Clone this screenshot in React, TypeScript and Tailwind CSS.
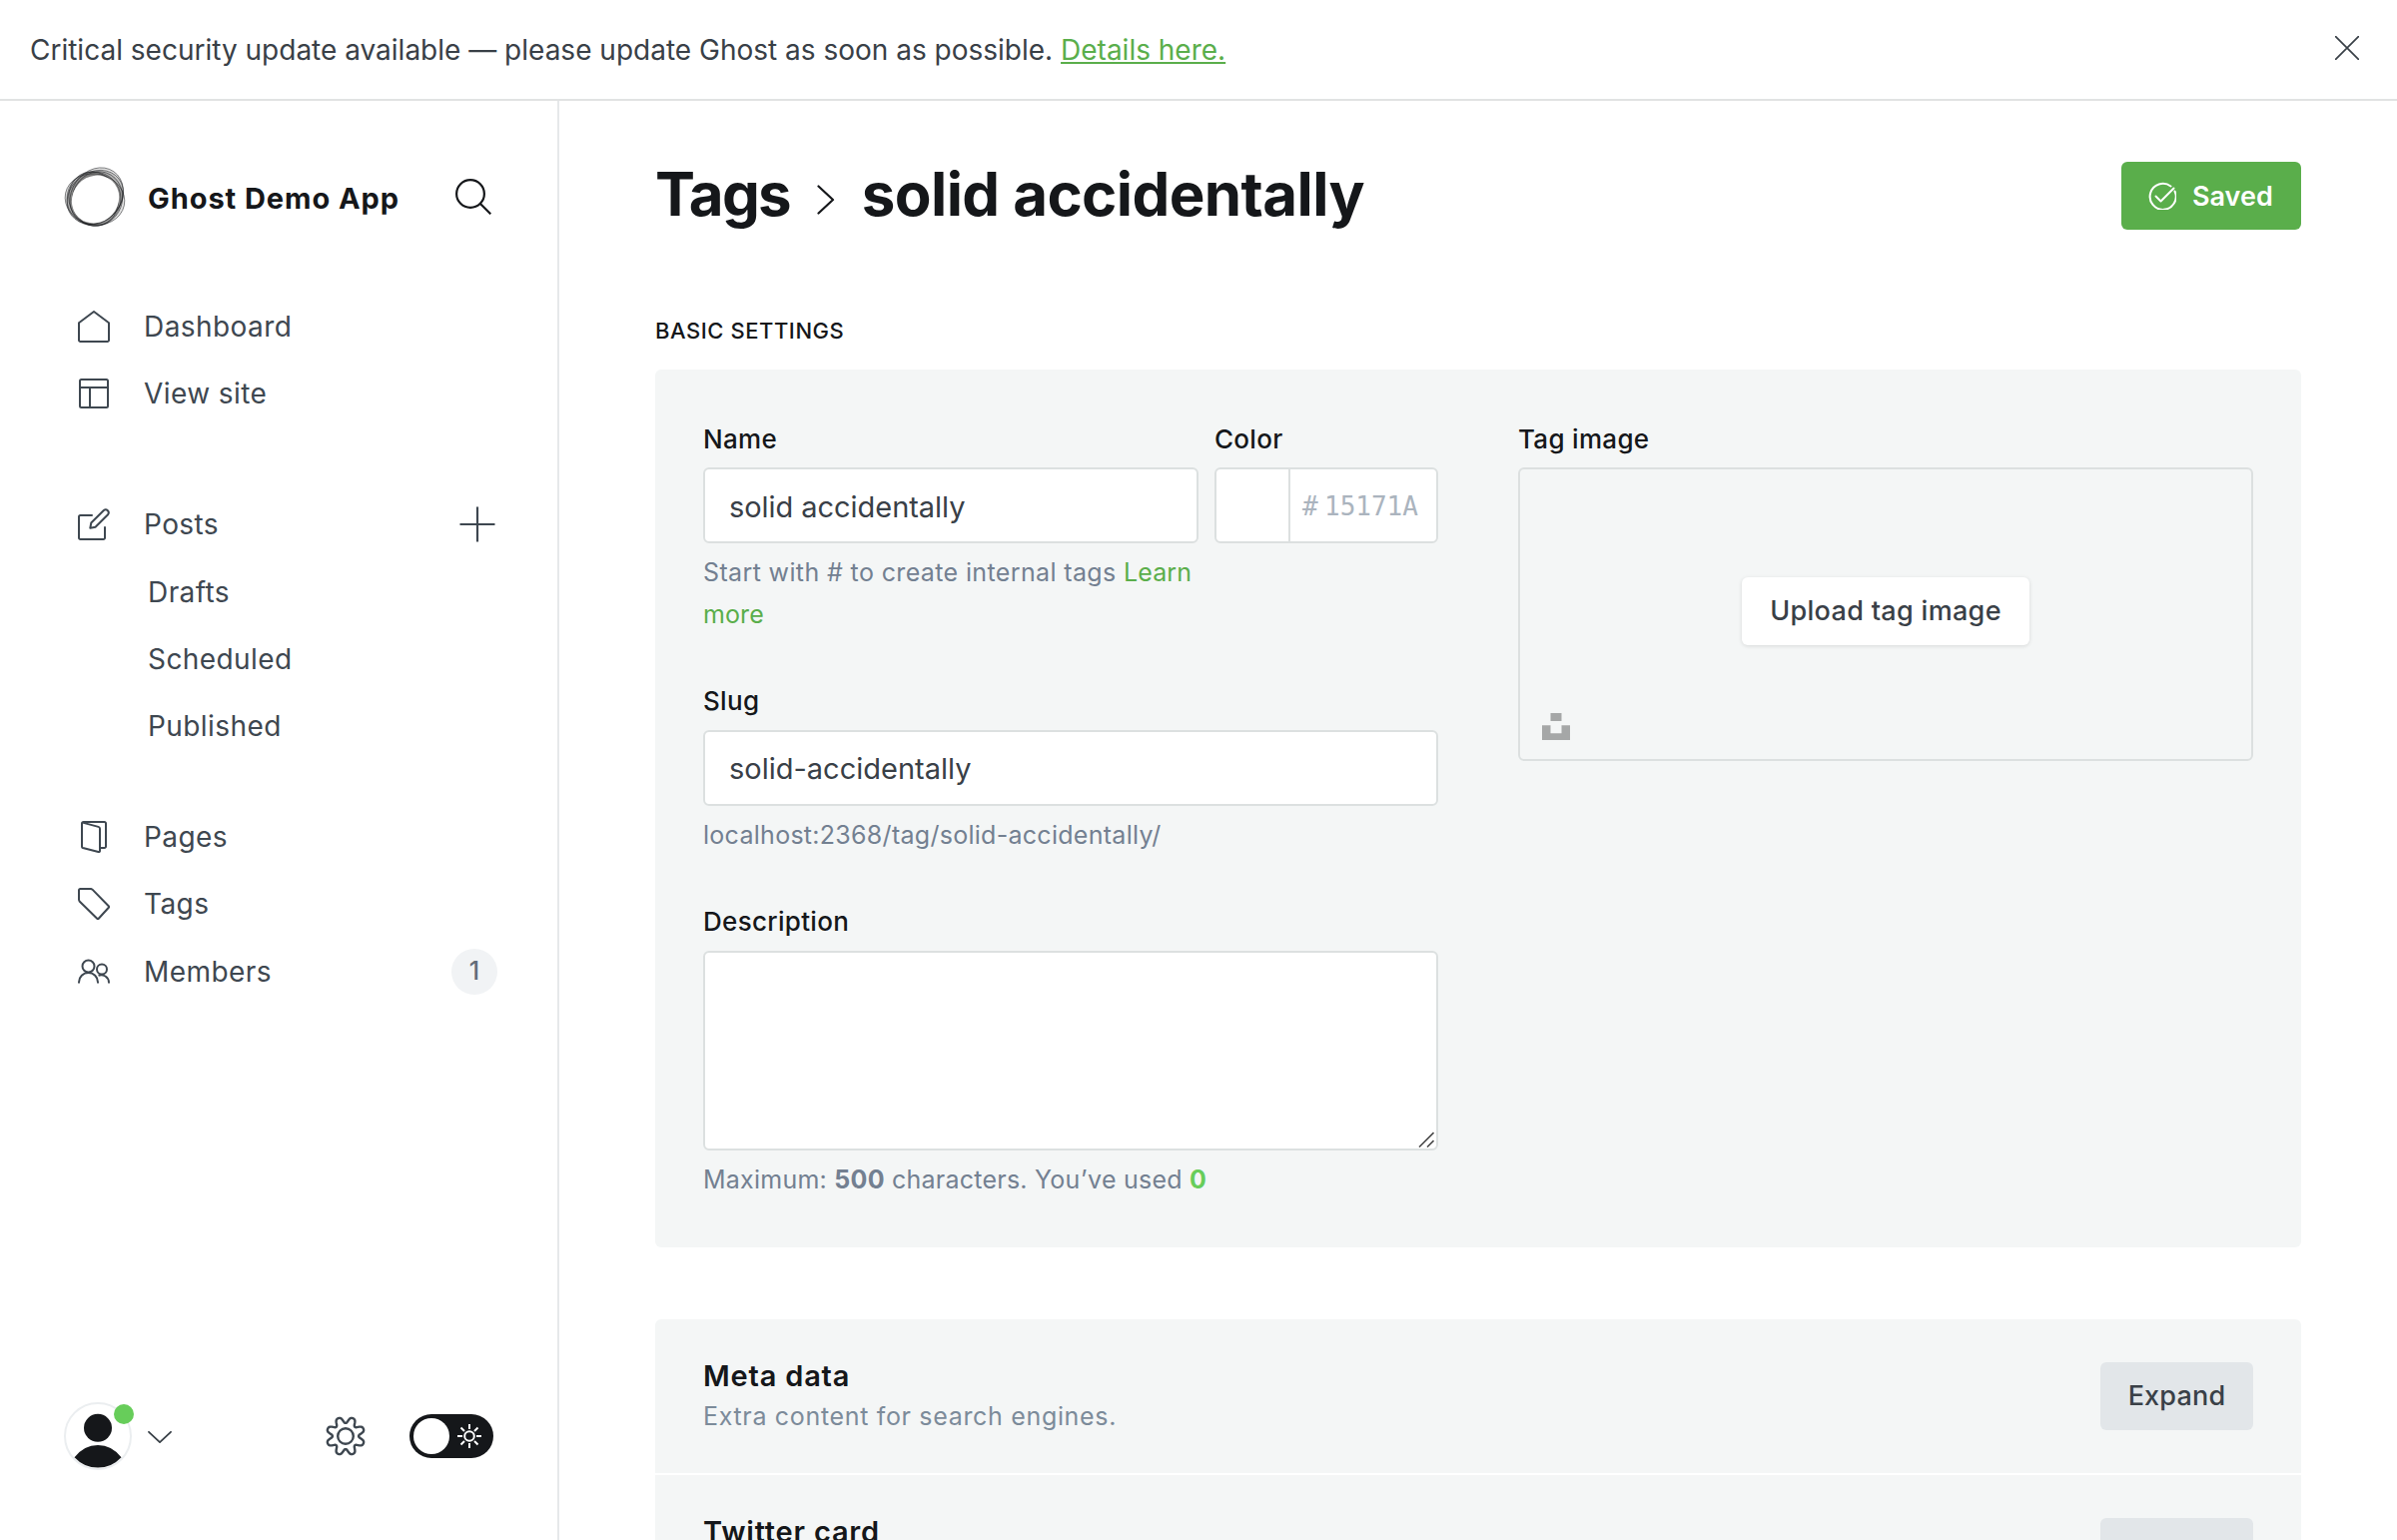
import React from "react";

const RINGS = [
  { cx: 29, cy: 32, rx: 27, ry: 27, rot: 0 },
  { cx: 33, cy: 31, rx: 25, ry: 27.5, rot: 20 },
  { cx: 30, cy: 30.5, rx: 30, ry: 25, rot: -38 },
  { cx: 31, cy: 28.5, rx: 25, ry: 30, rot: 35 },
  { cx: 30.5, cy: 32.5, rx: 30, ry: 25.5, rot: 12 },
  { cx: 31.5, cy: 32, rx: 27.5, ry: 24.5, rot: 70 },
];

function Logo() {
  return (
    <svg viewBox="0 0 60 60" className="ml-px h-[60px] w-[60px] shrink-0 overflow-visible">
      {RINGS.map((r, i) => (
        <ellipse
          key={i}
          cx={r.cx}
          cy={r.cy}
          rx={r.rx}
          ry={r.ry}
          transform={`rotate(${r.rot} 30 30)`}
          fill="#15171a"
          fillOpacity={0.13}
          stroke="#15171a"
          strokeOpacity={0.6}
          strokeWidth={0.8}
        />
      ))}
      <ellipse cx="30.5" cy="32.5" rx="24.8" ry="22.8" fill="#fff" transform="rotate(-48 30.5 32.5)" />
    </svg>
  );
}

function gearPath(c: number, mid: number, amp: number) {
  const pts: string[] = [];
  for (let i = 0; i < 360; i += 2) {
    const t = (i * Math.PI) / 180;
    const r = mid - amp * Math.tanh(Math.cos(8 * t) * 1.2 - 0.25);
    pts.push(`${(c + r * Math.sin(t)).toFixed(2)} ${(c - r * Math.cos(t)).toFixed(2)}`);
  }
  return `M${pts.join("L")}Z`;
}
const GEAR = gearPath(20, 15.9, 3.8);

const stroke = {
  fill: "none",
  stroke: "currentColor",
  strokeWidth: 2,
  strokeLinecap: "round" as const,
  strokeLinejoin: "round" as const,
};

const HomeIcon = () => (
  <svg viewBox="0 0 32 32" className="h-8 w-8" {...stroke}>
    <path d="M1 12.2 16 1l15 11.2V29.5a1.5 1.5 0 0 1-1.5 1.5h-27A1.5 1.5 0 0 1 1 29.5Z" />
  </svg>
);
const SiteIcon = () => (
  <svg viewBox="0 0 32 32" className="h-8 w-8" {...stroke}>
    <rect x="2" y="2" width="28" height="28" rx="1.5" />
    <path d="M2 10h28M12 10v20" />
  </svg>
);
const PostsIcon = () => (
  <svg viewBox="0 0 32 32" className="h-8 w-8" {...stroke}>
    <path d="M14 7H2.5A1.5 1.5 0 0 0 1 8.5v21A1.5 1.5 0 0 0 2.5 31h23a1.5 1.5 0 0 0 1.5-1.5V19" />
    <path d="M12.3 19.7l1-5.2L25.9 2a3 3 0 0 1 4.2 4.2L17.5 18.7Z" />
  </svg>
);
const PagesIcon = () => (
  <svg viewBox="0 0 32 32" className="h-8 w-8" {...stroke}>
    <path d="M4.6 1.6 20.5 5.9a2 2 0 0 1 1.5 1.9V30a1.2 1.2 0 0 1-1.5 1L5 27a1.5 1.5 0 0 1-1-1.5V2.5A1.5 1.5 0 0 1 5.5 1h21A1.5 1.5 0 0 1 28 2.5v23a1.5 1.5 0 0 1-1.5 1.5H22" />
  </svg>
);
const TagIcon = () => (
  <svg viewBox="0 0 32 32" className="h-8 w-8" {...stroke}>
    <path d="M2.5 1H13l1.5.6L31 18.5a.8.8 0 0 1 0 1L20.5 31a.8.8 0 0 1-1 0L1.6 13.5 1 12V2.5A1.5 1.5 0 0 1 2.5 1Z" />
  </svg>
);
const MembersIcon = () => (
  <svg viewBox="0 0 32 32" className="h-8 w-8" {...stroke} strokeLinecap="butt">
    <circle cx="10.5" cy="10.5" r="6" />
    <path d="M1 27.5v-1a9.5 9.5 0 0 1 19 0v1" />
    <circle cx="24" cy="13.5" r="5" />
    <path d="M20.5 19.7a7.8 7.8 0 0 1 10.5 7v.8" />
  </svg>
);

function NavRow({ icon, label, children }: { icon: React.ReactNode; label: string; children?: React.ReactNode }) {
  return (
    <div className="flex h-[67px] items-center pl-[78px] pr-[62px] text-[#3e4750]">
      <span className="mr-[34px] shrink-0">{icon}</span>
      <span className="flex-1 text-[28px] tracking-[0.42px]">{label}</span>
      {children}
    </div>
  );
}

function SubRow({ label }: { label: string }) {
  return <div className="flex h-[67px] items-center pl-[148px] text-[28px] tracking-[0.42px] text-[#3e4750]">{label}</div>;
}

function Sidebar() {
  return (
    <aside className="flex w-[560px] shrink-0 flex-col border-r-2 border-[#e6e8ea]">
      <div className="mt-[66px] flex h-[60px] items-center pl-16 pr-[66px]">
        <Logo />
        <span className="ml-[23px] flex-1 pt-[3px] text-[29px] font-bold tracking-[0.94px] text-[#15171a]">Ghost Demo App</span>
        <svg viewBox="0 0 36 36" className="h-9 w-9" {...stroke} stroke="#15171a" strokeWidth={2.2} strokeLinecap="butt">
          <circle cx="15" cy="15" r="13.9" />
          <path d="M25 25 35.3 35.3" />
        </svg>
      </div>
      <nav className="mt-[66px]">
        <NavRow icon={<HomeIcon />} label="Dashboard" />
        <NavRow icon={<SiteIcon />} label="View site" />
        <div className="h-16" />
        <NavRow icon={<PostsIcon />} label="Posts">
          <svg viewBox="0 0 36 36" className="h-9 w-9" {...stroke} strokeWidth={2.2} strokeLinecap="butt">
            <path d="M18 .5v35M.5 18h35" />
          </svg>
        </NavRow>
        <div className="mb-[44px] mt-px">
          <SubRow label="Drafts" />
          <SubRow label="Scheduled" />
          <SubRow label="Published" />
        </div>
        <NavRow icon={<PagesIcon />} label="Pages" />
        <NavRow icon={<TagIcon />} label="Tags" />
        <div className="h-px" />
        <NavRow icon={<MembersIcon />} label="Members">
          <span className="-mr-[2px] flex h-[46px] w-[46px] items-center justify-center rounded-full bg-[#f1f3f5] pt-px text-[25px] font-medium text-[#626d79]">
            1
          </span>
        </NavRow>
      </nav>
      <div className="mb-[70px] mt-auto flex h-[68px] items-center pl-16 pr-16">
        <div className="relative h-[68px] w-[68px]">
          <svg viewBox="0 0 68 68" className="h-[68px] w-[68px]">
            <circle cx="34" cy="34" r="33" fill="#fff" stroke="#ebeef0" strokeWidth="2" />
            <circle cx="34" cy="25.8" r="14" fill="#15171a" />
            <path d="M10.5 55.3Q20 43 34 43T57.5 55.3A32 32 0 0 1 10.5 55.3Z" fill="#15171a" />
          </svg>
          <span className="absolute -right-[2px] top-[2px] h-5 w-5 rounded-full bg-[#67cd5a]" />
        </div>
        <svg viewBox="0 0 24 12" className="ml-4 mt-px h-3 w-6" {...stroke} strokeWidth={1.8}>
          <path d="M1 .8 12 11.2 23 .8" />
        </svg>
        <svg viewBox="0 0 40 40" className="ml-auto h-10 w-10 text-[#3e4750]" {...stroke} strokeWidth={2.4}>
          <path d={GEAR} />
          <circle cx="20" cy="20" r="7.8" />
        </svg>
        <div className="ml-11 flex h-11 w-[84px] items-center rounded-full bg-[#15171a] pl-1 pr-3">
          <span className="h-9 w-9 rounded-full bg-white" />
          <svg viewBox="0 0 24 24" className="ml-2 h-6 w-6" fill="none" stroke="#fff" strokeWidth="2">
            <circle cx="12" cy="12" r="4.8" />
            <path d="M12 0v5M12 19v5M0 12h5M19 12h5M3.5 3.5 7 7M17 17l3.5 3.5M3.5 20.5 7 17M17 7l3.5-3.5" />
          </svg>
        </div>
      </div>
    </aside>
  );
}

const Label = ({ children }: { children: React.ReactNode }) => (
  <div className="h-[26px] text-[26px] font-medium leading-[26px] tracking-[0.3px] text-[#15171a]">{children}</div>
);

function BasicSettings() {
  return (
    <section className="mt-[26px] flex h-[879px] shrink-0 justify-between rounded-md bg-[#f4f6f6] px-12 pt-[57px]">
      <div className="w-[736px]">
        <div className="flex gap-4">
          <div className="w-[496px]">
            <Label>Name</Label>
            <div className="mt-[15px] flex h-[76px] items-center rounded-md border-2 border-[#dce0e0] bg-white px-6 pt-[3px] text-[29px] tracking-[-0.05px] text-[#394047]">
              solid accidentally
            </div>
            <p className="mt-2 text-[25px] leading-[42px] tracking-[0.37px] text-[#738091]">
              Start with # to create internal tags <a className="tracking-[0.1px] text-[#5aae4b]">Learn more</a>
            </p>
          </div>
          <div className="w-[224px]">
            <Label>Color</Label>
            <div className="mt-[15px] flex h-[76px] items-center rounded-md border-2 border-[#dce0e0] bg-white font-['DejaVu_Sans_Mono',monospace] text-[26px] text-[#abb4be]">
              <span className="h-full w-[74px] border-r-2 border-[#dce0e0]" />
              <span className="ml-3 w-[22px] pt-[2px]">#</span>
              <span className="pt-[2px]">15171A</span>
            </div>
          </div>
        </div>
        <div className="mt-[53px]">
          <Label>Slug</Label>
          <div className="mt-4 flex h-[76px] items-center rounded-md border-2 border-[#dce0e0] bg-white px-6 pt-px text-[29px] text-[#394047]">
            solid-accidentally
          </div>
          <p className="mt-2 text-[25px] leading-[42px] tracking-[0.28px] text-[#738091]">localhost:2368/tag/solid-accidentally/</p>
        </div>
        <div className="mt-[53px]">
          <Label>Description</Label>
          <div className="mt-4 flex h-[200px] items-end justify-end rounded-md border-2 border-[#dce0e0] bg-white">
            <svg viewBox="0 0 16 16" className="mb-px mr-[2px] h-4 w-4" fill="none" stroke="#4a4a4a" strokeWidth="1.6">
              <path d="M1 15.5 15.5 1M9 15.5l6.5-6.5" />
            </svg>
          </div>
          <p className="mt-2 text-[25px] leading-[42px] tracking-[0.24px] text-[#738091]">
            Maximum: <b className="font-bold">500</b> characters. You’ve used <b className="font-bold text-[#67cd5a]">0</b>
          </p>
        </div>
      </div>
      <div className="w-[736px]">
        <Label>Tag image</Label>
        <div className="relative mt-[15px] flex h-[294px] items-center justify-center rounded-md border-2 border-[#dce0e0]">
          <span className="mt-[-7px] flex h-[68px] w-[288px] items-center justify-center rounded-md bg-white pt-px text-[27px] font-medium tracking-[0.32px] text-[#394047] shadow-[0_1px_4px_rgba(0,0,0,0.12)]">
            Upload tag image
          </span>
          <svg viewBox="0 0 28 27" className="absolute bottom-[19px] left-[22px] h-[27px] w-7" fill="#a5a7a7">
            <path d="M8.5 0h11v8h-11ZM0 12.3h8.5v8h11v-8H28V27H0Z" />
          </svg>
        </div>
      </div>
    </section>
  );
}

const rowTitle = "text-[29px] font-semibold leading-[28px] tracking-[0.8px] text-[#15171a]";
const rowButton =
  "flex h-[68px] w-[153px] items-center justify-center rounded-md bg-[#e2e6e9] pt-px text-[27px] font-medium tracking-[0.2px] text-[#394047]";

export default function App() {
  return (
    <div className="flex h-[1542px] w-[2400px] flex-col overflow-hidden bg-white font-['Inter',sans-serif] text-[#394047] antialiased">
      <header className="flex h-[101px] shrink-0 items-center justify-between border-b-2 border-[#e1e3e3] pl-[30px] pr-[38px]">
        <p className="text-[28px]">
          Critical security update available — please update Ghost as soon as possible.{" "}
          <a className="text-[#5aae4b] underline">Details here.</a>
        </p>
        <svg viewBox="0 0 24 24" className="-mt-[3px] h-6 w-6" {...stroke} strokeWidth={1.7}>
          <path d="M.5.5l23 23M23.5.5l-23 23" />
        </svg>
      </header>
      <div className="flex min-h-0 flex-1">
        <Sidebar />
        <main className="flex min-w-0 flex-1 flex-col overflow-hidden pl-24 pr-24">
          <div className="mt-[61px] flex h-[68px] shrink-0 items-center justify-between">
            <h1 className="flex items-center text-[60px] font-bold leading-[68px] tracking-[-0.6px] text-[#15171a]">
              <span className="-mt-[5px] tracking-[-1.8px]">Tags</span>
              <svg viewBox="0 0 18 30" className="ml-[27px] mr-[27px] mt-2 h-[30px] w-[18px]" {...stroke} strokeWidth={2.2}>
                <path d="M1.5 1.5 16 15 1.5 28.5" />
              </svg>
              <span className="-mt-[5px]">solid accidentally</span>
            </h1>
            <span className="flex h-[68px] w-[180px] items-center rounded-md bg-[#5aae4b] pl-[27px] text-[27px] font-semibold text-white">
              <svg viewBox="0 0 28 28" className="mr-4 h-7 w-7" {...stroke} strokeWidth={2}>
                <path d="M26.5 9.5A13 13 0 1 1 22.5 4.5" />
                <path d="M7.5 14.5 12.5 19.5 25.5 6.5" />
              </svg>
              <span className="pt-[2px]">Saved</span>
            </span>
          </div>
          <div className="mt-[88px] h-[26px] shrink-0 text-[22px] font-medium leading-[26px] tracking-[0.55px] text-[#15171a]">BASIC SETTINGS</div>
          <BasicSettings />
          <div className="mt-[72px] flex shrink-0 flex-col gap-[2px]">
            <div className="flex h-[154px] justify-between rounded-t-md bg-[#f4f6f6] px-12 pt-[43px]">
              <div>
                <div className={rowTitle}>Meta data</div>
                <div className="mt-3 text-[25px] leading-[28px] tracking-[0.67px] text-[#7c8b9a]">Extra content for search engines.</div>
              </div>
              <span className={rowButton}>Expand</span>
            </div>
            <div className="flex h-[154px] justify-between bg-[#f4f6f6] px-12 pt-[43px]">
              <div className={rowTitle}>Twitter card</div>
              <span className={rowButton} />
            </div>
          </div>
        </main>
      </div>
    </div>
  );
}
